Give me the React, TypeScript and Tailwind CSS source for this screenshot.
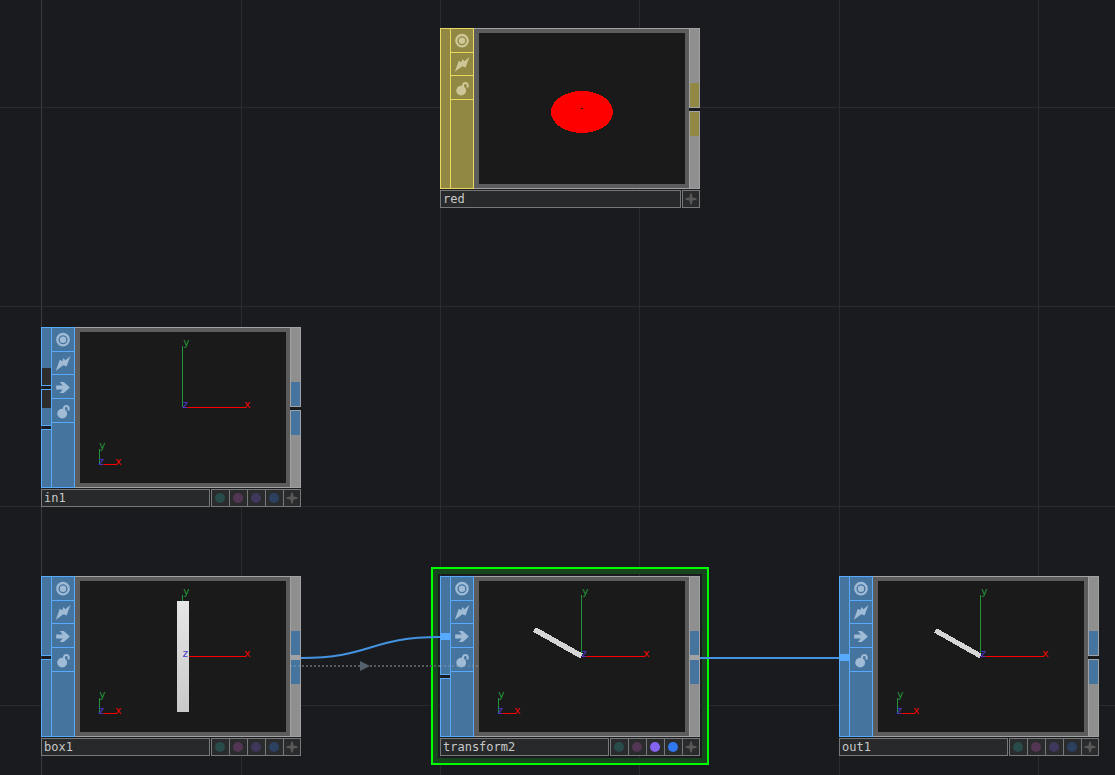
import React from "react";

type Kind = "sop" | "mat";
type Seg = { h: string; tone?: "top" | "bottom" | "none" };
type NodeData = {
  name: string;
  kind: Kind;
  place: string;
  inputs: React.ReactNode;
  linked: boolean;
  lit: boolean;
  shape: "disc" | "none" | "box" | "barA" | "barB";
};

const LINE = { sop: "border-[#58aaff]", mat: "border-[#e8d860]" };
const FILL = { sop: "bg-[#45749f]", mat: "bg-[#918843]" };

function Icon({ name, kind }: { name: string; kind: Kind }) {
  const c = kind === "sop" ? "#a0bbd6" : "#cdc696";
  return (
    <svg width="16" height="16" viewBox="0 0 16 16" aria-hidden="true" className="block shrink-0">
      {name === "Viewer" && (
        <g fill="none" stroke={c}>
          <circle cx="8" cy="7.7" r="5.7" strokeWidth="2.3" />
          <circle cx="8" cy="7.7" r="3.2" fill={c} stroke="none" />
        </g>
      )}
      {name === "Bypass" && (
        <path fill={c} d="M15.4 1 L11.6 11.6 L8.4 10.2 L0.8 15.8 L4.8 4.8 L7.2 6.2 L8.4 3 L10.4 5.2 Z" />
      )}
      {name === "Display" && (
        <path fill={c} d="M1.2 6.6 H7.8 L4.8 3 H8.8 L14.9 8.5 L8.8 14 H4.8 L7.8 10.4 H1.2 Z" />
      )}
      {name === "Lock" && (
        <g>
          <circle cx="7.2" cy="10.6" r="4.9" fill={c} />
          <path d="M9 7.4 V5 A2.4 2.4 0 0 1 13.6 4.6 V7.4" fill="none" stroke={c} strokeWidth="2.1" />
        </g>
      )}
    </svg>
  );
}

function Flags({ kind }: { kind: Kind }) {
  const names = kind === "sop" ? ["Viewer", "Bypass", "Display", "Lock"] : ["Viewer", "Bypass", "Lock"];
  return (
    <div className={`flex w-6 flex-col border ${LINE[kind]} ${FILL[kind]}`}>
      {names.map((n) => (
        <button
          key={n}
          type="button"
          aria-label={n}
          className={`flex w-full items-center justify-center border-b ${n === "Bypass" ? "h-[23px]" : "h-6"} ${LINE[kind]}`}
        >
          <Icon name={n} kind={kind} />
        </button>
      ))}
    </div>
  );
}

function Rail({ h, tone = "none" }: Seg) {
  return (
    <div className={`flex w-full flex-col border border-r-0 border-[#58aaff] bg-[#45749f] ${h}`}>
      {tone === "bottom" && <div className="mt-auto h-[17px] bg-[#2d2d2d]" />}
      {tone === "top" && <div className="h-[18px] bg-[#2d2d2d]" />}
    </div>
  );
}

const Plug = () => <div className="h-[5px] w-full bg-[#58aaff]" />;
const Gap = () => <div className="h-[3px] w-full" />;

function Output({ kind, linked }: { kind: Kind; linked: boolean }) {
  return (
    <div className="flex w-[11px] flex-col">
      <div
        className={`flex flex-col justify-end border border-[#a2a2a4] bg-[#8f8f8f] ${linked ? "h-[79px] border-b-0" : "h-20"}`}
      >
        <div className={`h-6 ${FILL[kind]}`} />
      </div>
      <div className={linked ? "h-[5px] bg-[#a2a2a4]" : "h-[3px]"} />
      <div className={`flex flex-1 flex-col border border-[#a2a2a4] bg-[#8f8f8f] ${linked ? "border-t-0" : ""}`}>
        <div className={`h-6 ${FILL[kind]}`} />
      </div>
    </div>
  );
}

function Axes({ shape }: { shape: NodeData["shape"] }) {
  return (
    <g fontFamily='"DejaVu Sans Mono", monospace' fontSize="11">
      <path d="M102.5 14V75" stroke="#239238" />
      <path d="M103 75.5H166" stroke="#ff0000" />
      <path d="M19.5 117V132" stroke="#239238" />
      <path d="M20 132.5H37" stroke="#ff0000" />
      {shape === "box" && <rect x="97" y="20" width="12" height="111" fill="url(#boxShade)" />}
      {shape === "barA" && <path d="M55.5 48.5L102.5 75" stroke="#d6d6d6" strokeWidth="5.4" shapeRendering="crispEdges" />}
      {shape === "barB" && <path d="M57.5 49.5L102.5 75" stroke="#d6d6d6" strokeWidth="5" shapeRendering="crispEdges" />}
      <text x="103" y="14" fill="#239238">y</text>
      <text x="164" y="76" fill="#ff0000">x</text>
      <text x="102" y="76" fill="#4a38d0">z</text>
      <text x="19" y="117" fill="#239238">y</text>
      <text x="35" y="133" fill="#ff0000">x</text>
      <text x="18" y="133" fill="#4a38d0">z</text>
    </g>
  );
}

function Viewer({ shape }: { shape: NodeData["shape"] }) {
  return (
    <div className="flex-1 border-y border-[#a2a2a4]">
      <div className="h-full border-4 border-l-5 border-[#5c5c5c] bg-[#1a1a1a]">
        <svg width="206" height="151" viewBox="0 0 206 151" aria-hidden="true" className="block">
          <defs>
            <linearGradient id="boxShade" x1="0" y1="0" x2="0" y2="1">
              <stop offset="0" stopColor="#e6e6e6" />
              <stop offset="1" stopColor="#c9c9c9" />
            </linearGradient>
          </defs>
          {shape === "disc" ? (
            <g>
              <ellipse cx="103" cy="79" rx="31" ry="21" fill="#ff0000" shapeRendering="crispEdges" />
              <rect x="102" y="75" width="2" height="1" fill="#300000" />
            </g>
          ) : (
            <Axes shape={shape} />
          )}
        </svg>
      </div>
    </div>
  );
}

function Dot({ label, color }: { label: string; color: string }) {
  return (
    <button type="button" aria-label={label} className="flex w-[18px] items-center justify-start border-l border-[#77787a] pl-[3px]">
      <span className={`size-[10px] rounded-full ${color}`} />
    </button>
  );
}

function Footer({ node }: { node: NodeData }) {
  return (
    <div className="mt-px flex h-[18px] gap-px">
      <input
        aria-label="Operator name"
        defaultValue={node.name}
        className="min-w-0 flex-1 border border-[#77787a] bg-[#27292b] px-0.5 font-['DejaVu_Sans_Mono',monospace] text-[12px] leading-4 text-[#c8c8c8] outline-none"
      />
      <div className="flex border-y border-r border-[#77787a] bg-[#2a2b2c]">
        {node.kind === "sop" && (
          <>
            <Dot label="Display" color="bg-[#294b4a]" />
            <Dot label="Template" color="bg-[#523653]" />
            <Dot label="Render" color={node.lit ? "bg-[#8464ee]" : "bg-[#3f385c]"} />
            <Dot label="Pickable" color={node.lit ? "bg-[#3078f0]" : "bg-[#2c4060]"} />
          </>
        )}
        <button type="button" aria-label="Activate viewer" className="flex w-[17px] items-center justify-center border-l border-[#77787a]">
          <svg width="12" height="12" viewBox="0 0 12 12" aria-hidden="true">
            <path fill="#585858" d="M5.3 0.5H6.7L7.6 4.4L11.5 5.3V6.7L7.6 7.6L6.7 11.5H5.3L4.4 7.6L0.5 6.7V5.3L4.4 4.4Z" />
          </svg>
        </button>
      </div>
    </div>
  );
}

function OpNode({ node }: { node: NodeData }) {
  return (
    <article aria-label={node.name} className={`absolute w-[260px] ${node.place}`}>
      <div className="flex h-[161px]">
        <div className="flex w-[10px] flex-col">{node.inputs}</div>
        <Flags kind={node.kind} />
        <Viewer shape={node.shape} />
        <Output kind={node.kind} linked={node.linked} />
      </div>
      <Footer node={node} />
    </article>
  );
}

const NODES: NodeData[] = [
  {
    name: "red",
    kind: "mat",
    place: "left-[440px] top-[28px]",
    inputs: <div className="flex-1 border border-r-0 border-[#e8d860] bg-[#918843]" />,
    linked: false,
    lit: false,
    shape: "disc",
  },
  {
    name: "in1",
    kind: "sop",
    place: "left-[41px] top-[327px]",
    inputs: (
      <>
        <Rail h="h-[59px]" tone="bottom" />
        <Gap />
        <Rail h="h-[37px]" tone="top" />
        <Gap />
        <Rail h="flex-1" />
      </>
    ),
    linked: false,
    lit: false,
    shape: "none",
  },
  {
    name: "box1",
    kind: "sop",
    place: "left-[41px] top-[576px]",
    inputs: (
      <>
        <Rail h="h-20" />
        <Gap />
        <Rail h="flex-1" />
      </>
    ),
    linked: true,
    lit: false,
    shape: "box",
  },
  {
    name: "transform2",
    kind: "sop",
    place: "left-[440px] top-[576px]",
    inputs: (
      <>
        <Rail h="h-[58px]" />
        <Plug />
        <Rail h="h-9" />
        <Gap />
        <Rail h="flex-1" />
      </>
    ),
    linked: true,
    lit: true,
    shape: "barA",
  },
  {
    name: "out1",
    kind: "sop",
    place: "left-[839px] top-[576px]",
    inputs: (
      <>
        <Rail h="h-[79px]" />
        <Plug />
        <Rail h="flex-1" />
      </>
    ),
    linked: false,
    lit: false,
    shape: "barB",
  },
];

const COLUMNS = [241, 440, 639, 839, 1038];
const ROWS = [107, 306, 506, 705];

export default function App() {
  return (
    <main className="relative min-h-screen w-full overflow-hidden bg-[#1a1b1f]">
      <svg className="absolute inset-0 h-full w-full" aria-hidden="true" shapeRendering="crispEdges">
        <rect x="41" y="0" width="1" height="100%" fill="#3a3a46" />
        {COLUMNS.map((x) => (
          <rect key={x} x={x} y="0" width="1" height="100%" fill="#2a2b2f" />
        ))}
        {ROWS.map((y) => (
          <rect key={y} x="0" y={y} width="100%" height="1" fill="#2a2b2f" />
        ))}
      </svg>

      <div className="absolute left-[431px] top-[567px] h-[198px] w-[278px] border-2 border-[#00ff00]">
        <div className="h-full border-5 border-[#15441d]" />
      </div>

      <svg className="absolute inset-0 h-full w-full" fill="none" stroke="#4393e0" strokeWidth="2" aria-hidden="true">
        <path d="M301 658C371 658 370 637 440 637" />
        <path d="M700 658H839" />
      </svg>

      {NODES.map((n) => (
        <OpNode key={n.name} node={n} />
      ))}

      <svg className="pointer-events-none absolute inset-0 h-full w-full" aria-hidden="true">
        <path d="M290 666H301M440 666H480" stroke="#9aa8b4" strokeOpacity="0.35" strokeWidth="2" strokeDasharray="2 2" />
        <path d="M302 666H440" stroke="#555b62" strokeWidth="2" strokeDasharray="2 2" />
        <path d="M360 661L370 666L360 671Z" fill="#55616c" />
      </svg>
    </main>
  );
}
